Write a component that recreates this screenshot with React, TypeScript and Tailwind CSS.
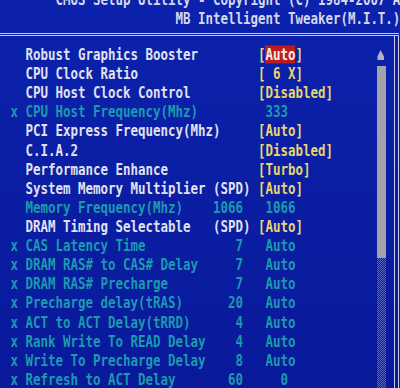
import React from 'react';

type Seg = { col: number; text: string; cls: string };

const W = 'text-[#e0e2f2]';
const Y = 'text-[#e6d670]';
const T = 'text-[#1b9aae]';
const HL = 'bg-[#be1c1c] text-[#f4eeee]';

// helpers for the three kinds of rows
const item = (label: string, value: string, spd = false): Seg[] => {
  const segs: Seg[] = [{ col: 2, text: label, cls: W }];
  if (spd) segs.push({ col: 27, text: '(SPD)', cls: W });
  segs.push({ col: 33, text: '[', cls: Y });
  segs.push({ col: 34, text: value, cls: Y });
  segs.push({ col: 34 + value.length, text: ']', cls: Y });
  return segs;
};

const timing = (label: string, num: string, val: string): Seg[] => [
  { col: 0, text: 'x', cls: T },
  { col: 2, text: label, cls: T },
  { col: 31 - num.length, text: num, cls: T },
  { col: 34, text: val, cls: T },
];

const rows: Seg[][] = [
  [
    { col: 2, text: 'Robust Graphics Booster', cls: W },
    { col: 33, text: '[', cls: Y },
    { col: 34, text: 'Auto', cls: HL },
    { col: 38, text: ']', cls: Y },
  ],
  item('CPU Clock Ratio', ' 6 X'),
  item('CPU Host Clock Control', 'Disabled'),
  [
    { col: 0, text: 'x', cls: T },
    { col: 2, text: 'CPU Host Frequency(Mhz)', cls: T },
    { col: 34, text: '333', cls: T },
  ],
  item('PCI Express Frequency(Mhz)', 'Auto'),
  item('C.I.A.2', 'Disabled'),
  item('Performance Enhance', 'Turbo'),
  item('System Memory Multiplier', 'Auto', true),
  [
    { col: 2, text: 'Memory Frequency(Mhz)', cls: T },
    { col: 27, text: '1066', cls: T },
    { col: 34, text: '1066', cls: T },
  ],
  item('DRAM Timing Selectable', 'Auto', true),
  timing('CAS Latency Time', '7', 'Auto'),
  timing('DRAM RAS# to CAS# Delay', '7', 'Auto'),
  timing('DRAM RAS# Precharge', '7', 'Auto'),
  timing('Precharge delay(tRAS)', '20', 'Auto'),
  timing('ACT to ACT Delay(tRRD)', '4', 'Auto'),
  timing('Rank Write To READ Delay', '4', 'Auto'),
  timing('Write To Precharge Delay', '8', 'Auto'),
  [
    { col: 0, text: 'x', cls: T },
    { col: 2, text: 'Refresh to ACT Delay', cls: T },
    { col: 29, text: '60', cls: T },
    { col: 36, text: '0', cls: T },
  ],
];

const Line = ({ segs }: { segs: Seg[] }) => {
  let pos = 0;
  const out: React.ReactNode[] = [];
  segs.forEach((s, i) => {
    const gap = Math.max(0, s.col - pos);
    if (gap) out.push(' '.repeat(gap));
    out.push(
      <span key={i} className={s.cls}>
        {s.text}
      </span>
    );
    pos = Math.max(pos, s.col) + s.text.length;
  });
  return (
    <div className="h-[19.12px] leading-[19.12px] whitespace-pre scale-y-120 overflow-hidden">
      {out}
    </div>
  );
};

export default function App() {
  return (
    <div className="w-[400px] h-[388px] overflow-hidden bg-linear-to-b from-[#0c22ac] to-[#09199a] font-['DejaVu_Sans_Mono',monospace] font-bold text-[12.46px] select-none">
      {/* title */}
      <div className="-mt-[10.5px] pl-[10.5px] text-[#d4d8ee]">
        <div className="h-[19.12px] leading-[19.12px] whitespace-pre scale-y-120">
          {'      CMOS Setup Utility - Copyright (C) 1984-2007 Award Software'}
        </div>
        <div className="h-[19.12px] leading-[19.12px] whitespace-pre scale-y-120">
          {'                      MB Intelligent Tweaker(M.I.T.)'}
        </div>
      </div>

      {/* double rule */}
      <div className="mt-[4.9px] w-[399px] h-[3px] border-y border-[#c6cbea]" />

      <div className="flex h-[360px]">
        {/* settings list */}
        <div className="w-[377px] pl-[10.5px] pt-[9.4px] overflow-hidden">
          {rows.map((segs, i) => (
            <Line key={i} segs={segs} />
          ))}
        </div>

        {/* scroll bar */}
        <div className="w-[9px] flex flex-col pt-[14.5px]">
          <svg width="9" height="10" viewBox="0 0 9 10" className="shrink-0">
            <path d="M3.5 0 L7 6.5 L7 10 L0.5 10 L0.5 6.5 Z" fill="#b3b4bc" />
          </svg>
          <div className="mt-[5.5px] h-[192px] bg-[#a2a3aa]" />
          <div className="flex-1 bg-[repeating-conic-gradient(#5766c2_0_25%,#0b1ea2_0_50%)] bg-[length:2px_2px]" />
        </div>

        <div className="w-[8px]" />
        {/* right frame */}
        <div className="w-[5px] border-x border-[#c6cbea]" />
      </div>
    </div>
  );
}
